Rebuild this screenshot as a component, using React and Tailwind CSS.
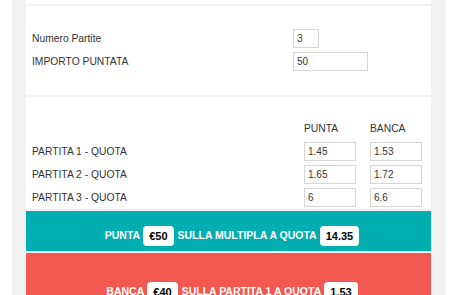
import React from 'react';

const font = { fontFamily: '"Liberation Sans", Arial, sans-serif' };

function Field({ value, w }) {
  return (
    <div
      className={`${w} h-[19px] border border-[#d6d6d6] bg-white flex items-center pl-[3px] text-[10px] text-[#333]`}
    >
      {value}
    </div>
  );
}

function Chip({ children }) {
  return (
    <span className="h-[20px] px-[6px] mx-[3px] rounded-[4px] bg-white text-black text-[11px] flex items-center">
      {children}
    </span>
  );
}

export default function App() {
  const rows = [
    ['PARTITA 1 - QUOTA', '1.45', '1.53'],
    ['PARTITA 2 - QUOTA', '1.65', '1.72'],
    ['PARTITA 3 - QUOTA', '6', '6.6'],
  ];

  return (
    <div className="w-[460px] h-[295px] bg-white overflow-hidden" style={font}>
      <div className="ml-[12px] w-[433px] h-full bg-[#f2f2f2] px-[14px] flex flex-col gap-[2px]">
        {/* top card tail */}
        <div className="h-[4px] bg-white shrink-0" />

        {/* match count & stake */}
        <div className="bg-white h-[89px] shrink-0 pt-[23px] px-[6px] flex flex-col gap-[4px] text-[10.3px] text-[#333]">
          <div className="flex items-center">
            <span className="w-[261px]">Numero Partite</span>
            <Field value="3" w="w-[26px]" />
          </div>
          <div className="flex items-center">
            <span className="w-[261px]">IMPORTO PUNTATA</span>
            <Field value="50" w="w-[75px]" />
          </div>
        </div>

        {/* odds */}
        <div className="bg-white h-[112px] shrink-0 pt-[25px] px-[6px] text-[10.3px] text-[#333]">
          <div className="flex items-center h-[14px] mb-[6px]">
            <span className="w-[272px]" />
            <span className="w-[66px]">PUNTA</span>
            <span>BANCA</span>
          </div>
          <div className="flex flex-col gap-[4px]">
            {rows.map(([label, p, b]) => (
              <div key={label} className="flex items-center">
                <span className="w-[272px]">{label}</span>
                <Field value={p} w="w-[52px]" />
                <span className="w-[14px]" />
                <Field value={b} w="w-[52px]" />
              </div>
            ))}
          </div>
        </div>

        {/* back */}
        <div className="bg-[#00aeb0] h-[40px] shrink-0 pt-[15px] pl-[10px] flex justify-center text-[10.5px] font-bold text-white">
          <div className="flex items-center h-[20px]">
            <span>PUNTA</span>
            <Chip>€50</Chip>
            <span className="ml-[1px]">SULLA MULTIPLA A QUOTA</span>
            <Chip>14.35</Chip>
          </div>
        </div>

        {/* lay */}
        <div className="bg-[#f25850] h-[80px] shrink-0 pt-[29px] pl-[10px] flex justify-center text-[10.5px] font-bold text-white">
          <div className="flex items-center h-[20px]">
            <span>BANCA</span>
            <Chip>€40</Chip>
            <span className="ml-[1px]">SULLA PARTITA 1 A QUOTA</span>
            <Chip>1.53</Chip>
          </div>
        </div>
      </div>
    </div>
  );
}
